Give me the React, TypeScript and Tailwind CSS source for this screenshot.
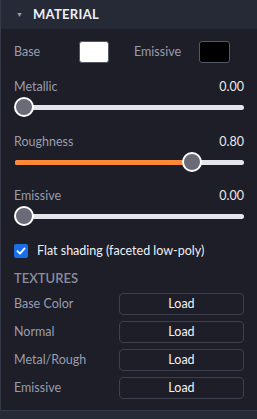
import React from "react";

function Slider({ label, value, pct, fill }: { label: string; value: string; pct: number; fill?: boolean }) {
  const pos = `calc(10px + (100% - 20px) * ${pct / 100})`;
  return (
    <div className="flex flex-col">
      <div className="flex justify-between items-center h-[18px] text-[12.5px]">
        <span className="text-[#9a9db0]">{label}</span>
        <span className="text-[#e8e9ef]">{value}</span>
      </div>
      <div className="relative h-[20px] mt-[1px]">
        <div className="absolute left-[1px] right-0 top-[8px] h-[5px] rounded-full bg-[#e4e4ec]" />
        {fill && (
          <div className="absolute left-[1px] top-[8px] h-[5px] rounded-full bg-[#ff8836]" style={{ width: pos }} />
        )}
        <div
          className="absolute top-[0px] w-[20px] h-[20px] rounded-full bg-[#6a6a78] border-2 border-white -translate-x-1/2"
          style={{ left: pos }}
        />
      </div>
    </div>
  );
}

function TexRow({ label }: { label: string }) {
  return (
    <div className="flex items-center h-[22px]">
      <span className="w-[105px] text-[12.5px] text-[#9a9db0]">{label}</span>
      <button className="flex-1 h-[22px] rounded-[4px] border border-[#3c3f4e] bg-[#1d1e27] text-[12.5px] text-[#f2f3f7] font-normal flex items-center justify-center">
        Load
      </button>
    </div>
  );
}

export default function App() {
  return (
    <div
      className="w-[257px] h-[419px] bg-[#262a36] flex flex-col overflow-hidden"
      style={{ fontFamily: 'Lato, "Noto Sans", sans-serif' }}
    >
      <div className="border-l border-b border-[#363a48] flex flex-col">
        <div className="h-[29px] bg-[#262a36] flex items-center pl-[15px]">
          <span className="text-[7px] text-[#9a9db0] w-[17px]">▼</span>
          <span className="text-[13px] font-bold text-[#eef0f6] tracking-[0.3px]">MATERIAL</span>
        </div>
        <div className="bg-[#1d1e27] h-[381px] pl-[13px] pr-[13px] pt-[12px] flex flex-col">
          <div className="flex items-center h-[22px]">
            <span className="w-[65px] text-[12.5px] text-[#9a9db0]">Base</span>
            <div className="w-[30px] h-[22px] rounded-[3px] bg-white border border-[#555866]" />
            <span className="ml-[25px] w-[65px] text-[12.5px] text-[#9a9db0]">Emissive</span>
            <div className="w-[31px] h-[22px] rounded-[3px] bg-black border border-[#555866]" />
          </div>
          <div className="mt-[15px]">
            <Slider label="Metallic" value="0.00" pct={0} />
          </div>
          <div className="mt-[16px]">
            <Slider label="Roughness" value="0.80" pct={80} fill />
          </div>
          <div className="mt-[15px]">
            <Slider label="Emissive" value="0.00" pct={0} />
          </div>
          <div className="flex items-center mt-[16px] h-[18px]">
            <div className="w-[14px] h-[14px] rounded-[2px] bg-[#1a6fe8] flex items-center justify-center">
              <svg width="10" height="10" viewBox="0 0 10 10">
                <path d="M1.5 5.2 L4 7.6 L8.6 2.4" stroke="white" strokeWidth="1.8" fill="none" strokeLinecap="round" strokeLinejoin="round" />
              </svg>
            </div>
            <span className="ml-[9px] text-[12.5px] text-[#eef0f6]">Flat shading (faceted low-poly)</span>
          </div>
          <div className="mt-[10px] h-[18px] flex items-center text-[13px] font-semibold text-[#8a8d9e]">TEXTURES</div>
          <div className="mt-[5px] flex flex-col gap-[6px]">
            <TexRow label="Base Color" />
            <TexRow label="Normal" />
            <TexRow label="Metal/Rough" />
            <TexRow label="Emissive" />
          </div>
        </div>
      </div>
    </div>
  );
}
